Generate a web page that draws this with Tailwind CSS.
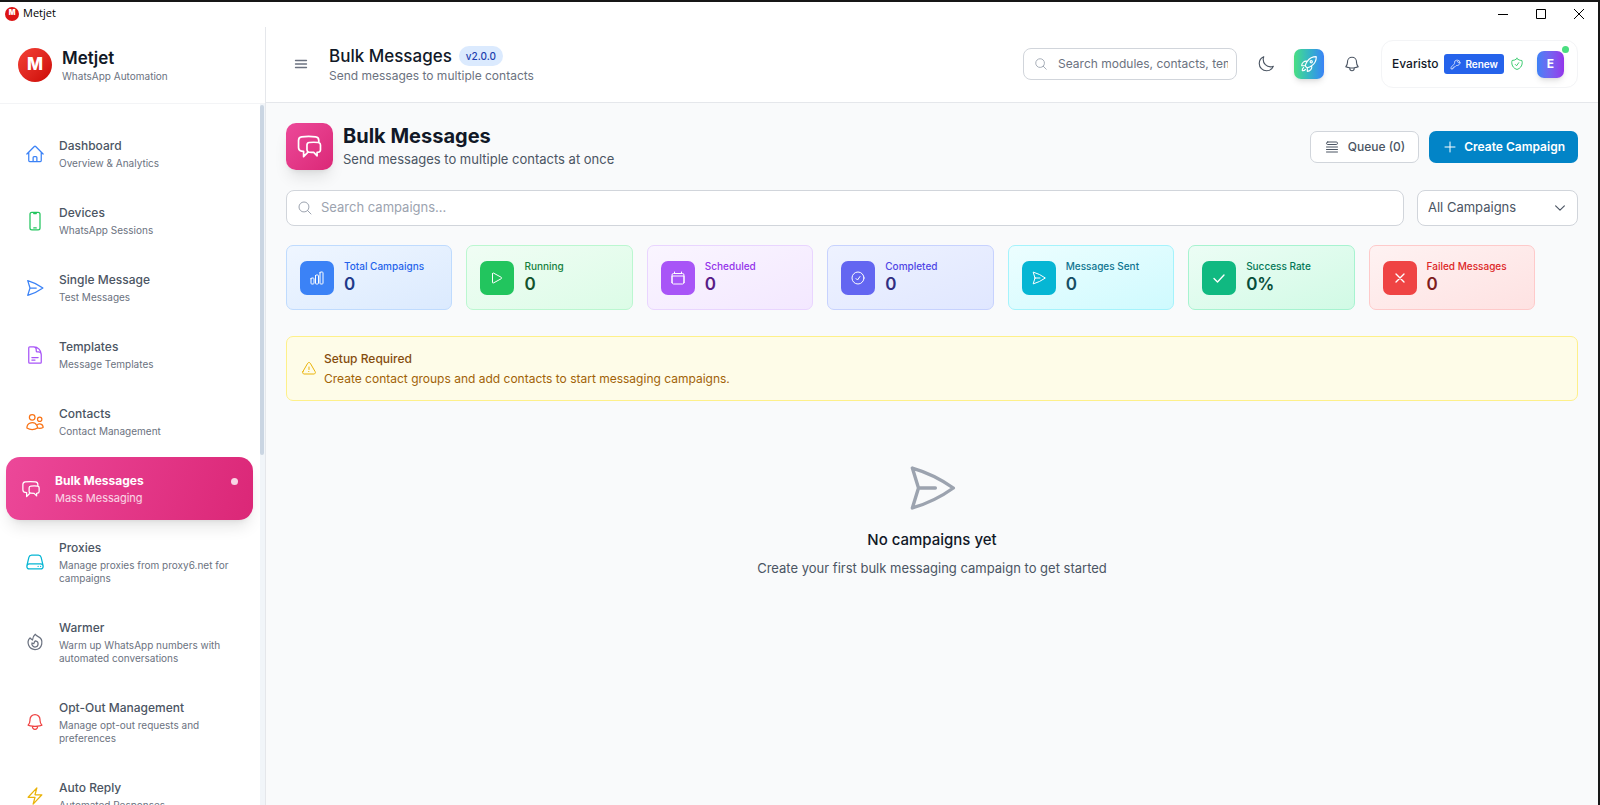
<!DOCTYPE html>
<html lang="en">
<head>
  <meta charset="UTF-8" />
  <meta name="viewport" content="width=device-width, initial-scale=1.0" />
  <title>Metjet</title>
  <script src="https://cdn.jsdelivr.net/npm/@tailwindcss/browser@4"></script>
</head>
<body class="h-screen overflow-hidden font-['Inter',sans-serif] text-[#111827] bg-white">
  <!-- Icon set -->
  <svg class="hidden" aria-hidden="true">
    <symbol id="home" viewBox="0 0 24 24"><path d="M2.25 12l8.954-8.955c.44-.439 1.152-.439 1.591 0L21.75 12M4.5 9.75v10.125c0 .621.504 1.125 1.125 1.125H9.75v-4.875c0-.621.504-1.125 1.125-1.125h2.25c.621 0 1.125.504 1.125 1.125V21h4.125c.621 0 1.125-.504 1.125-1.125V9.75M8.25 21h8.25"/></symbol>
    <symbol id="phone" viewBox="0 0 24 24"><path d="M10.5 1.5H8.25A2.25 2.25 0 006 3.75v16.5a2.25 2.25 0 002.25 2.25h7.5A2.25 2.25 0 0018 20.25V3.75a2.25 2.25 0 00-2.25-2.25H13.5m-3 0V3h3V1.5m-3 0h3m-3 18.75h3"/></symbol>
    <symbol id="send" viewBox="0 0 24 24"><path d="M6 12L3.269 3.126A59.768 59.768 0 0121.485 12 59.77 59.77 0 013.27 20.876L5.999 12zm0 0h7.5"/></symbol>
    <symbol id="document" viewBox="0 0 24 24"><path d="M19.5 14.25v-2.625a3.375 3.375 0 00-3.375-3.375h-1.5A1.125 1.125 0 0113.5 7.125v-1.5a3.375 3.375 0 00-3.375-3.375H8.25m0 12.75h7.5m-7.5 3H12M10.5 2.25H5.625c-.621 0-1.125.504-1.125 1.125v17.25c0 .621.504 1.125 1.125 1.125h12.75c.621 0 1.125-.504 1.125-1.125V11.25a9 9 0 00-9-9z"/></symbol>
    <symbol id="users" viewBox="0 0 24 24"><path d="M15 19.128a9.38 9.38 0 002.625.372 9.337 9.337 0 004.121-.952 4.125 4.125 0 00-7.533-2.493M15 19.128v-.003c0-1.113-.285-2.16-.786-3.07M15 19.128v.106A12.318 12.318 0 018.624 21c-2.331 0-4.512-.645-6.374-1.766l-.001-.109a6.375 6.375 0 0111.964-3.07M12 6.375a3.375 3.375 0 11-6.75 0 3.375 3.375 0 016.75 0zm8.25 2.25a2.625 2.625 0 11-5.25 0 2.625 2.625 0 015.25 0z"/></symbol>
    <symbol id="chat" viewBox="0 0 24 24"><path d="M20.25 8.511c.884.284 1.5 1.128 1.5 2.097v4.286c0 1.136-.847 2.1-1.98 2.193-.34.027-.68.052-1.02.072v3.091l-3-3c-1.354 0-2.694-.055-4.02-.163a2.115 2.115 0 01-.825-.242m9.345-8.334a2.126 2.126 0 00-.476-.095 48.64 48.64 0 00-8.048 0c-1.131.094-1.976 1.057-1.976 2.192v4.286c0 .837.46 1.58 1.155 1.951m9.345-8.334V6.637c0-1.621-1.152-3.026-2.76-3.235A48.455 48.455 0 0011.25 3c-2.115 0-4.198.137-6.24.402-1.608.209-2.76 1.614-2.76 3.235v6.226c0 1.621 1.152 3.026 2.76 3.235.577.075 1.157.14 1.74.194V21l4.155-4.155"/></symbol>
    <symbol id="server" viewBox="0 0 24 24"><path d="M21.75 17.25v-.228a4.5 4.5 0 00-.12-1.03l-2.268-9.64a3.375 3.375 0 00-3.285-2.602H7.923a3.375 3.375 0 00-3.285 2.602l-2.268 9.64a4.5 4.5 0 00-.12 1.03v.228m19.5 0a3 3 0 01-3 3H5.25a3 3 0 01-3-3m19.5 0a3 3 0 00-3-3H5.25a3 3 0 00-3 3m16.5 0h.008v.008h-.008v-.008zm-3 0h.008v.008h-.008v-.008z"/></symbol>
    <symbol id="fire" viewBox="0 0 24 24"><path d="M15.362 5.214A8.252 8.252 0 0112 21 8.25 8.25 0 016.038 7.048 8.287 8.287 0 009 9.6a8.983 8.983 0 013.361-6.867 8.21 8.21 0 003 2.48z"/><path d="M12 18a3.75 3.75 0 00.495-7.467 5.99 5.99 0 00-1.925 3.546 5.974 5.974 0 01-2.133-1A3.75 3.75 0 0012 18z"/></symbol>
    <symbol id="bell" viewBox="0 0 24 24"><path d="M14.857 17.082a23.848 23.848 0 005.454-1.31A8.967 8.967 0 0118 9.75v-.7V9A6 6 0 006 9v.75a8.967 8.967 0 01-2.312 6.022c1.733.64 3.56 1.085 5.455 1.31m5.714 0a24.255 24.255 0 01-5.714 0m5.714 0a3 3 0 11-5.714 0"/></symbol>
    <symbol id="bolt" viewBox="0 0 24 24"><path d="M3.75 13.5l10.5-11.25L12 10.5h8.25L9.75 21.75 12 13.5H3.75z"/></symbol>
    <symbol id="bars" viewBox="0 0 24 24"><path d="M3.75 6.75h16.5M3.75 12h16.5m-16.5 5.25h16.5"/></symbol>
    <symbol id="search" viewBox="0 0 24 24"><path d="M21 21l-5.197-5.197m0 0A7.5 7.5 0 105.196 5.196a7.5 7.5 0 0010.607 10.607z"/></symbol>
    <symbol id="moon" viewBox="0 0 24 24"><path d="M21.752 15.002A9.718 9.718 0 0118 15.75c-5.385 0-9.75-4.365-9.75-9.75 0-1.33.266-2.597.748-3.752A9.753 9.753 0 003 11.25C3 16.635 7.365 21 12.75 21a9.753 9.753 0 009.002-5.998z"/></symbol>
    <symbol id="rocket" viewBox="0 0 24 24"><path d="M15.59 14.37a6 6 0 01-5.84 7.38v-4.8m5.84-2.58a14.98 14.98 0 006.16-12.12A14.98 14.98 0 009.631 8.41m5.96 5.96a14.926 14.926 0 01-5.841 2.58m-.119-8.54a6 6 0 00-7.381 5.84h4.8m2.581-5.84a14.927 14.927 0 00-2.58 5.84m2.699 2.7c-.103.021-.207.041-.311.06a15.09 15.09 0 01-2.448-2.448 14.9 14.9 0 01.06-.312m-2.24 2.39a4.493 4.493 0 00-1.757 4.306 4.493 4.493 0 004.306-1.758M16.5 9a1.5 1.5 0 11-3 0 1.5 1.5 0 013 0z"/></symbol>
    <symbol id="key" viewBox="0 0 24 24"><path d="M15.75 5.25a3 3 0 013 3m3 0a6 6 0 01-7.029 5.912c-.563-.097-1.159.026-1.563.43L10.5 17.25H8.25v2.25H6v2.25H2.25v-2.818c0-.597.237-1.17.659-1.591l6.499-6.499c.404-.404.527-1 .43-1.563A6 6 0 1121.75 8.25z"/></symbol>
    <symbol id="shield" viewBox="0 0 24 24"><path d="M9 12.75L11.25 15 15 9.75m-3-7.036A11.959 11.959 0 013.598 6 11.99 11.99 0 003 9.749c0 5.592 3.824 10.29 9 11.623 5.176-1.332 9-6.03 9-11.622 0-1.31-.21-2.571-.598-3.751h-.152c-3.196 0-6.1-1.248-8.25-3.285z"/></symbol>
    <symbol id="queue" viewBox="0 0 24 24"><path d="M3.75 12h16.5m-16.5 3.75h16.5M3.75 19.5h16.5M5.625 4.5h12.75a1.875 1.875 0 010 3.75H5.625a1.875 1.875 0 010-3.75z"/></symbol>
    <symbol id="plus" viewBox="0 0 24 24"><path d="M12 4.5v15m7.5-7.5h-15"/></symbol>
    <symbol id="chevron" viewBox="0 0 24 24"><path d="M19.5 8.25l-7.5 7.5-7.5-7.5"/></symbol>
    <symbol id="chart" viewBox="0 0 24 24"><path d="M3 13.125C3 12.504 3.504 12 4.125 12h2.25c.621 0 1.125.504 1.125 1.125v6.75C7.5 20.496 6.996 21 6.375 21h-2.25A1.125 1.125 0 013 19.875v-6.75zM9.75 8.625c0-.621.504-1.125 1.125-1.125h2.25c.621 0 1.125.504 1.125 1.125v11.25c0 .621-.504 1.125-1.125 1.125h-2.25a1.125 1.125 0 01-1.125-1.125V8.625zM16.5 4.125c0-.621.504-1.125 1.125-1.125h2.25C20.496 3 21 3.504 21 4.125v15.75c0 .621-.504 1.125-1.125 1.125h-2.25a1.125 1.125 0 01-1.125-1.125V4.125z"/></symbol>
    <symbol id="play" viewBox="0 0 24 24"><path d="M5.25 5.653c0-.856.917-1.398 1.667-.986l11.54 6.348a1.125 1.125 0 010 1.971l-11.54 6.347a1.125 1.125 0 01-1.667-.985V5.653z"/></symbol>
    <symbol id="calendar" viewBox="0 0 24 24"><path d="M6.75 3v2.25M17.25 3v2.25M3 18.75V7.5a2.25 2.25 0 012.25-2.25h13.5A2.25 2.25 0 0121 7.5v11.25m-18 0A2.25 2.25 0 005.25 21h13.5A2.25 2.25 0 0021 18.75m-18 0V9h18v9.75"/></symbol>
    <symbol id="check-circle" viewBox="0 0 24 24"><path d="M9 12.75L11.25 15 15 9.75M21 12a9 9 0 11-18 0 9 9 0 0118 0z"/></symbol>
    <symbol id="check" viewBox="0 0 24 24"><path d="M4.5 12.75l5.25 5.25 9.75-10.5"/></symbol>
    <symbol id="x" viewBox="0 0 24 24"><path d="M6 18L18 6M6 6l12 12"/></symbol>
    <symbol id="warning" viewBox="0 0 24 24"><path d="M12 9v3.75m-9.303 3.376c-.866 1.5.217 3.374 1.948 3.374h14.71c1.73 0 2.813-1.874 1.948-3.374L13.949 3.378c-.866-1.5-3.032-1.5-3.898 0L2.697 16.126zM12 15.75h.007v.008H12v-.008z"/></symbol>
  </svg>

  <div class="flex flex-col h-full border-t-2 border-r-2 border-neutral-900">
    <!-- Window title bar -->
    <div class="flex items-center justify-between h-[25px] shrink-0 pl-[5px] pr-[14px] pb-[2px]">
      <div class="flex items-center gap-1">
        <span class="flex items-center justify-center w-[14px] h-[14px] rounded-full bg-[#dc1414] text-white text-[7px] font-black">M</span>
        <span class="font-['Open_Sans',sans-serif] text-[11px] text-black">Metjet</span>
      </div>
      <div class="flex items-center gap-7 text-black">
        <button aria-label="Minimize"><svg class="w-[10px] h-[10px]" viewBox="0 0 10 10" fill="none" stroke="currentColor"><path d="M0 5.5h10"/></svg></button>
        <button aria-label="Maximize"><svg class="w-[10px] h-[10px]" viewBox="0 0 10 10" fill="none" stroke="currentColor"><path d="M.5.5h9v9h-9z"/></svg></button>
        <button aria-label="Close"><svg class="w-[10px] h-[10px]" viewBox="0 0 10 10" fill="none" stroke="currentColor"><path d="M0 0l10 10M10 0L0 10"/></svg></button>
      </div>
    </div>

    <div class="flex flex-1 min-h-0">
      <!-- Sidebar -->
      <aside class="flex flex-col w-[266px] shrink-0 border-r border-gray-200">
        <div class="flex items-center gap-[10px] h-[77px] shrink-0 px-[18px] border-b border-gray-100">
          <span class="flex items-center justify-center w-[34px] h-[34px] rounded-full bg-linear-to-br from-[#f43f35] to-[#cc0000] text-white text-[17px] font-extrabold">M</span>
          <div class="pt-[2px]">
            <div class="text-[17px] leading-[20px] font-semibold">Metjet</div>
            <div class="text-[10px] leading-[16px] text-[#6b7280]">WhatsApp Automation</div>
          </div>
        </div>
        <div class="flex flex-1 min-h-0">
          <nav class="flex flex-col flex-1 gap-1 overflow-hidden pt-[18px] pl-[6px] pr-[7px]">
            <a href="#" class="flex items-center gap-[14px] shrink-0 px-[19px] py-[15px]">
              <svg class="w-5 h-5 shrink-0 text-[#3b82f6]" fill="none" stroke="currentColor" stroke-width="1.5" stroke-linecap="round" stroke-linejoin="round"><use href="#home"/></svg>
              <div>
                <div class="text-[12px] leading-[18px] font-medium text-[#4b5563]">Dashboard</div>
                <div class="mt-[2px] text-[10px] leading-[13px] text-[#6b7280]">Overview &amp; Analytics</div>
              </div>
            </a>
            <a href="#" class="flex items-center gap-[14px] shrink-0 px-[19px] py-[15px]">
              <svg class="w-5 h-5 shrink-0 text-[#22c55e]" fill="none" stroke="currentColor" stroke-width="1.5" stroke-linecap="round" stroke-linejoin="round"><use href="#phone"/></svg>
              <div>
                <div class="text-[12px] leading-[18px] font-medium text-[#4b5563]">Devices</div>
                <div class="mt-[2px] text-[10px] leading-[13px] text-[#6b7280]">WhatsApp Sessions</div>
              </div>
            </a>
            <a href="#" class="flex items-center gap-[14px] shrink-0 px-[19px] py-[15px]">
              <svg class="w-5 h-5 shrink-0 text-[#3b82f6]" fill="none" stroke="currentColor" stroke-width="1.5" stroke-linecap="round" stroke-linejoin="round"><use href="#send"/></svg>
              <div>
                <div class="text-[12px] leading-[18px] font-medium text-[#4b5563]">Single Message</div>
                <div class="mt-[2px] text-[10px] leading-[13px] text-[#6b7280]">Test Messages</div>
              </div>
            </a>
            <a href="#" class="flex items-center gap-[14px] shrink-0 px-[19px] py-[15px]">
              <svg class="w-5 h-5 shrink-0 text-[#a855f7]" fill="none" stroke="currentColor" stroke-width="1.5" stroke-linecap="round" stroke-linejoin="round"><use href="#document"/></svg>
              <div>
                <div class="text-[12px] leading-[18px] font-medium text-[#4b5563]">Templates</div>
                <div class="mt-[2px] text-[10px] leading-[13px] text-[#6b7280]">Message Templates</div>
              </div>
            </a>
            <a href="#" class="flex items-center gap-[14px] shrink-0 px-[19px] py-[15px]">
              <svg class="w-5 h-5 shrink-0 text-[#f97316]" fill="none" stroke="currentColor" stroke-width="1.5" stroke-linecap="round" stroke-linejoin="round"><use href="#users"/></svg>
              <div>
                <div class="text-[12px] leading-[18px] font-medium text-[#4b5563]">Contacts</div>
                <div class="mt-[2px] text-[10px] leading-[13px] text-[#6b7280]">Contact Management</div>
              </div>
            </a>
            <a href="#" aria-current="page" class="flex items-center gap-[14px] shrink-0 px-[15px] py-[15px] rounded-[14px] bg-linear-[110deg] from-[#ec4899] to-[#db2777] text-white shadow-lg">
              <svg class="w-5 h-5 shrink-0" fill="none" stroke="currentColor" stroke-width="1.5" stroke-linecap="round" stroke-linejoin="round"><use href="#chat"/></svg>
              <div class="flex-1">
                <div class="flex items-center justify-between text-[12px] leading-[18px] font-bold">Bulk Messages <span class="w-[7px] h-[7px] rounded-full bg-white/80"></span></div>
                <div class="mt-[2px] text-[11px] leading-[13px] text-white/80">Mass Messaging</div>
              </div>
            </a>
            <a href="#" class="flex items-center gap-[14px] shrink-0 px-[19px] py-[15px]">
              <svg class="w-5 h-5 shrink-0 text-[#06b6d4]" fill="none" stroke="currentColor" stroke-width="1.5" stroke-linecap="round" stroke-linejoin="round"><use href="#server"/></svg>
              <div>
                <div class="text-[12px] leading-[18px] font-medium text-[#4b5563]">Proxies</div>
                <div class="mt-[2px] text-[10px] leading-[13px] text-[#6b7280]">Manage proxies from proxy6.net for campaigns</div>
              </div>
            </a>
            <a href="#" class="flex items-center gap-[14px] shrink-0 px-[19px] py-[15px]">
              <svg class="w-5 h-5 shrink-0 text-[#6b7280]" fill="none" stroke="currentColor" stroke-width="1.5" stroke-linecap="round" stroke-linejoin="round"><use href="#fire"/></svg>
              <div>
                <div class="text-[12px] leading-[18px] font-medium text-[#4b5563]">Warmer</div>
                <div class="mt-[2px] text-[10px] leading-[13px] text-[#6b7280]">Warm up WhatsApp numbers with automated conversations</div>
              </div>
            </a>
            <a href="#" class="flex items-center gap-[14px] shrink-0 px-[19px] py-[15px]">
              <svg class="w-5 h-5 shrink-0 text-[#ef4444]" fill="none" stroke="currentColor" stroke-width="1.5" stroke-linecap="round" stroke-linejoin="round"><use href="#bell"/></svg>
              <div>
                <div class="text-[12px] leading-[18px] font-medium text-[#4b5563]">Opt-Out Management</div>
                <div class="mt-[2px] text-[10px] leading-[13px] text-[#6b7280]">Manage opt-out requests and preferences</div>
              </div>
            </a>
            <a href="#" class="flex items-center gap-[14px] shrink-0 px-[19px] py-[15px]">
              <svg class="w-5 h-5 shrink-0 text-[#eab308]" fill="none" stroke="currentColor" stroke-width="1.5" stroke-linecap="round" stroke-linejoin="round"><use href="#bolt"/></svg>
              <div>
                <div class="text-[12px] leading-[18px] font-medium text-[#4b5563]">Auto Reply</div>
                <div class="mt-[2px] text-[10px] leading-[13px] text-[#6b7280]">Automated Responses</div>
              </div>
            </a>
          </nav>
          <!-- Scrollbar -->
          <div class="w-[5px] shrink-0 pt-px bg-slate-100">
            <div class="h-1/2 w-1 rounded-full bg-slate-300"></div>
          </div>
        </div>
      </aside>

      <div class="flex flex-col flex-1 min-w-0 bg-[#f9fafb]">
        <!-- Header -->
        <header class="flex items-center h-[76px] shrink-0 pl-[27px] pr-5 pb-px bg-white border-b border-gray-200">
          <button aria-label="Toggle menu" class="text-[#6b7280]"><svg class="w-4 h-4" fill="none" stroke="currentColor" stroke-width="2" stroke-linecap="round"><use href="#bars"/></svg></button>
          <div class="ml-5 pt-[3px]">
            <div class="flex items-center gap-[7px]">
              <span class="text-[17px] leading-[20px] font-medium">Bulk Messages</span>
              <span class="h-5 px-[7px] rounded-full bg-[#dbeafe] text-[10px] leading-[20px] font-medium text-[#1e40af]">v2.0.0</span>
            </div>
            <div class="text-[12px] leading-[20px] text-[#6b7280]">Send messages to multiple contacts</div>
          </div>
          <div class="flex items-center ml-auto">
            <label class="flex items-center gap-[10px] w-[214px] h-8 pl-[10px] pr-[8px] rounded-lg border border-[#d1d5db]">
              <svg class="w-[14px] h-[14px] shrink-0 text-[#9ca3af]" fill="none" stroke="currentColor" stroke-width="1.5" stroke-linecap="round"><use href="#search"/></svg>
              <input type="text" aria-label="Search modules" placeholder="Search modules, contacts, templates..." class="w-full min-w-0 text-[12px] outline-none placeholder:text-[#6b7280]" />
            </label>
            <button aria-label="Dark mode" class="ml-5 text-[#4b5563]"><svg class="w-[18px] h-[18px]" fill="none" stroke="currentColor" stroke-width="1.5" stroke-linecap="round" stroke-linejoin="round"><use href="#moon"/></svg></button>
            <button aria-label="Launch" class="flex items-center justify-center w-[30px] h-[30px] ml-[19px] rounded-[7px] bg-linear-to-r from-[#4ade80] to-[#3b82f6] text-white shadow-md"><svg class="w-[18px] h-[18px]" fill="none" stroke="currentColor" stroke-width="1.5" stroke-linecap="round" stroke-linejoin="round"><use href="#rocket"/></svg></button>
            <button aria-label="Notifications" class="ml-[19px] text-[#4b5563]"><svg class="w-[18px] h-[18px]" fill="none" stroke="currentColor" stroke-width="1.5" stroke-linecap="round" stroke-linejoin="round"><use href="#bell"/></svg></button>
            <div class="flex items-center h-12 ml-5 pl-[10px] pr-[13px] rounded-xl border border-gray-100">
              <span class="text-[12px] font-medium">Evaristo</span>
              <button class="flex items-center gap-1 h-5 ml-[6px] px-[6px] rounded-[3px] bg-[#2563eb] text-white text-[10px] font-semibold"><svg class="w-[11px] h-[11px]" fill="none" stroke="currentColor" stroke-width="1.5" stroke-linecap="round" stroke-linejoin="round"><use href="#key"/></svg>Renew</button>
              <svg class="w-[14px] h-[14px] ml-[6px] text-[#22c55e]" fill="none" stroke="currentColor" stroke-width="1.5" stroke-linecap="round" stroke-linejoin="round"><use href="#shield"/></svg>
              <div class="relative ml-[13px]">
                <span class="flex items-center justify-center w-[27px] h-[27px] rounded-[7px] bg-linear-to-r from-[#3b82f6] to-[#9333ea] text-white text-[12px] font-bold shadow-md">E</span>
                <span class="absolute -top-[5px] -right-[5px] w-[7px] h-[7px] rounded-full bg-[#4ade80]"></span>
              </div>
            </div>
          </div>
        </header>

        <main class="flex flex-col flex-1 px-5 pt-5">
          <!-- Page title -->
          <div class="flex items-center gap-[10px]">
            <span class="flex items-center justify-center w-[47px] h-[47px] rounded-[10px] bg-linear-to-br from-[#ec4899] to-[#db2777] text-white shadow-lg"><svg class="w-[27px] h-[27px]" fill="none" stroke="currentColor" stroke-width="1.5" stroke-linecap="round" stroke-linejoin="round"><use href="#chat"/></svg></span>
            <div>
              <h1 class="text-[20px] leading-[26px] font-bold">Bulk Messages</h1>
              <p class="text-[13px] leading-[21px] text-[#4b5563]">Send messages to multiple contacts at once</p>
            </div>
            <button class="flex items-center gap-2 h-8 ml-auto px-[13px] rounded-[7px] border border-[#d1d5db] bg-white text-[12px] font-medium text-[#4b5563]"><svg class="w-4 h-4" fill="none" stroke="currentColor" stroke-width="1.5" stroke-linecap="round" stroke-linejoin="round"><use href="#queue"/></svg>Queue (0)</button>
            <button class="flex items-center gap-[6px] h-8 px-[13px] rounded-[7px] bg-[#0284c7] text-[12px] font-semibold text-white"><svg class="w-4 h-4" fill="none" stroke="currentColor" stroke-width="1.5" stroke-linecap="round"><use href="#plus"/></svg>Create Campaign</button>
          </div>

          <!-- Filters -->
          <div class="flex gap-[13px] mt-5">
            <label class="flex items-center gap-2 flex-1 h-9 px-[10px] rounded-lg border border-[#d1d5db] bg-white">
              <svg class="w-4 h-4 shrink-0 text-[#9ca3af]" fill="none" stroke="currentColor" stroke-width="1.5" stroke-linecap="round"><use href="#search"/></svg>
              <input type="text" aria-label="Search campaigns" placeholder="Search campaigns..." class="w-full text-[13px] outline-none placeholder:text-[#9ca3af]" />
            </label>
            <div class="relative w-[161px]">
              <select aria-label="Campaign status" class="appearance-none w-full h-9 pl-[10px] pr-8 rounded-lg border border-[#d1d5db] bg-white text-[13px] text-[#4b5563]">
                <option>All Campaigns</option>
                <option>Running</option>
                <option>Scheduled</option>
                <option>Completed</option>
              </select>
              <svg class="absolute right-[11px] top-[11px] w-[14px] h-[14px] text-[#4b5563] pointer-events-none" fill="none" stroke="currentColor" stroke-width="2" stroke-linecap="round" stroke-linejoin="round"><use href="#chevron"/></svg>
            </div>
          </div>

          <!-- Stats -->
          <div class="grid grid-cols-7 gap-[14px] mt-[19px] mr-[43px]">
            <div class="flex items-center gap-[10px] h-[65px] px-[13px] rounded-[7px] border border-[#bfdbfe] bg-linear-to-br from-[#eff6ff] to-[#dbeafe]">
              <span class="flex items-center justify-center w-[34px] h-[34px] rounded-[7px] bg-[#3b82f6] text-white"><svg class="w-4 h-4" fill="none" stroke="currentColor" stroke-width="1.5" stroke-linecap="round" stroke-linejoin="round"><use href="#chart"/></svg></span>
              <div class="pb-[2px]">
                <div class="text-[10px] leading-[14px] font-medium text-[#2563eb]">Total Campaigns</div>
                <div class="text-[17px] leading-[22px] font-semibold text-[#1e3a8a]">0</div>
              </div>
            </div>
            <div class="flex items-center gap-[10px] h-[65px] px-[13px] rounded-[7px] border border-[#bbf7d0] bg-linear-to-br from-[#f0fdf4] to-[#dcfce7]">
              <span class="flex items-center justify-center w-[34px] h-[34px] rounded-[7px] bg-[#22c55e] text-white"><svg class="w-4 h-4" fill="none" stroke="currentColor" stroke-width="1.5" stroke-linecap="round" stroke-linejoin="round"><use href="#play"/></svg></span>
              <div class="pb-[2px]">
                <div class="text-[10px] leading-[14px] font-medium text-[#15803d]">Running</div>
                <div class="text-[17px] leading-[22px] font-semibold text-[#14532d]">0</div>
              </div>
            </div>
            <div class="flex items-center gap-[10px] h-[65px] px-[13px] rounded-[7px] border border-[#e9d5ff] bg-linear-to-br from-[#faf5ff] to-[#f3e8ff]">
              <span class="flex items-center justify-center w-[34px] h-[34px] rounded-[7px] bg-[#a855f7] text-white"><svg class="w-4 h-4" fill="none" stroke="currentColor" stroke-width="1.5" stroke-linecap="round" stroke-linejoin="round"><use href="#calendar"/></svg></span>
              <div class="pb-[2px]">
                <div class="text-[10px] leading-[14px] font-medium text-[#9333ea]">Scheduled</div>
                <div class="text-[17px] leading-[22px] font-semibold text-[#581c87]">0</div>
              </div>
            </div>
            <div class="flex items-center gap-[10px] h-[65px] px-[13px] rounded-[7px] border border-[#c7d2fe] bg-linear-to-br from-[#eef2ff] to-[#e0e7ff]">
              <span class="flex items-center justify-center w-[34px] h-[34px] rounded-[7px] bg-[#6366f1] text-white"><svg class="w-4 h-4" fill="none" stroke="currentColor" stroke-width="1.5" stroke-linecap="round" stroke-linejoin="round"><use href="#check-circle"/></svg></span>
              <div class="pb-[2px]">
                <div class="text-[10px] leading-[14px] font-medium text-[#4f46e5]">Completed</div>
                <div class="text-[17px] leading-[22px] font-semibold text-[#312e81]">0</div>
              </div>
            </div>
            <div class="flex items-center gap-[10px] h-[65px] px-[13px] rounded-[7px] border border-[#a5f3fc] bg-linear-to-br from-[#ecfeff] to-[#cffafe]">
              <span class="flex items-center justify-center w-[34px] h-[34px] rounded-[7px] bg-[#06b6d4] text-white"><svg class="w-4 h-4" fill="none" stroke="currentColor" stroke-width="1.5" stroke-linecap="round" stroke-linejoin="round"><use href="#send"/></svg></span>
              <div class="pb-[2px]">
                <div class="text-[10px] leading-[14px] font-medium text-[#0e7490]">Messages Sent</div>
                <div class="text-[17px] leading-[22px] font-semibold text-[#164e63]">0</div>
              </div>
            </div>
            <div class="flex items-center gap-[10px] h-[65px] px-[13px] rounded-[7px] border border-[#a7f3d0] bg-linear-to-br from-[#ecfdf5] to-[#d1fae5]">
              <span class="flex items-center justify-center w-[34px] h-[34px] rounded-[7px] bg-[#10b981] text-white"><svg class="w-4 h-4" fill="none" stroke="currentColor" stroke-width="2" stroke-linecap="round" stroke-linejoin="round"><use href="#check"/></svg></span>
              <div class="pb-[2px]">
                <div class="text-[10px] leading-[14px] font-medium text-[#047857]">Success Rate</div>
                <div class="text-[17px] leading-[22px] font-semibold text-[#064e3b]">0%</div>
              </div>
            </div>
            <div class="flex items-center gap-[10px] h-[65px] px-[13px] rounded-[7px] border border-[#fecaca] bg-linear-to-br from-[#fef2f2] to-[#fee2e2]">
              <span class="flex items-center justify-center w-[34px] h-[34px] rounded-[7px] bg-[#ef4444] text-white"><svg class="w-4 h-4" fill="none" stroke="currentColor" stroke-width="2" stroke-linecap="round" stroke-linejoin="round"><use href="#x"/></svg></span>
              <div class="pb-[2px]">
                <div class="text-[10px] leading-[14px] font-medium text-[#dc2626]">Failed Messages</div>
                <div class="text-[17px] leading-[22px] font-semibold text-[#7f1d1d]">0</div>
              </div>
            </div>
          </div>

          <!-- Setup notice -->
          <div class="flex items-center gap-[7px] h-[65px] mt-[26px] px-[14px] rounded-[7px] border border-[#fef08a] bg-[#fefce8]">
            <svg class="w-4 h-4 text-[#eab308]" fill="none" stroke="currentColor" stroke-width="1.5" stroke-linecap="round" stroke-linejoin="round"><use href="#warning"/></svg>
            <div>
              <h2 class="text-[12px] leading-[20px] font-medium text-[#854d0e]">Setup Required</h2>
              <p class="text-[12px] leading-[20px] text-[#a16207]">Create contact groups and add contacts to start messaging campaigns.</p>
            </div>
          </div>

          <!-- Empty state -->
          <div class="flex flex-col items-center mt-[60px] text-center">
            <svg class="w-[54px] h-[54px] text-[#9ca3af]" fill="none" stroke="currentColor" stroke-width="1.5" stroke-linecap="round" stroke-linejoin="round"><use href="#send"/></svg>
            <h3 class="mt-[13px] text-[15px] leading-[24px] font-medium">No campaigns yet</h3>
            <p class="mt-[6px] text-[13px] leading-[20px] text-[#4b5563]">Create your first bulk messaging campaign to get started</p>
          </div>
        </main>
      </div>
    </div>
  </div>
</body>
</html>
